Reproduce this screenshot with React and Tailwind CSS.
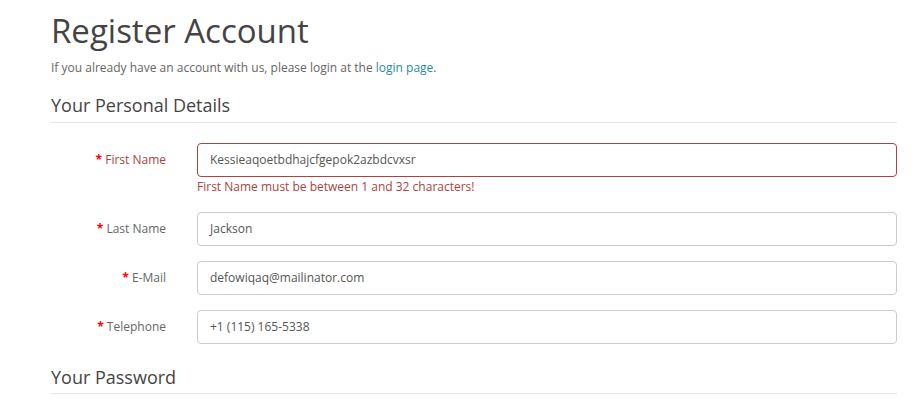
export default function App() {
  const rows = [
    { label: "First Name", value: "Kessieaqoetbdhajcfgepok2azbdcvxsr", error: "First Name must be between 1 and 32 characters!" },
    { label: "Last Name", value: "Jackson" },
    { label: "E-Mail", value: "defowiqaq@mailinator.com" },
    { label: "Telephone", value: "+1 (115) 165-5338" },
  ];
  return (
    <div className="w-[922px] h-[410px] overflow-hidden bg-white font-['Open_Sans',sans-serif] text-[#666]">
      <div className="pl-[51px] pr-[25px]">
        <h1 className="text-[33px] leading-[36px] text-[#444] pt-[13px] mb-[9px]">Register Account</h1>
        <p className="text-[12px] leading-[20px] mb-[15px]">
          If you already have an account with us, please login at the <span className="text-[#1f8c9c]">login page</span>.
        </p>
        <div className="text-[18px] leading-[24px] text-[#444] pb-[5px] border-b border-[#e5e5e5]">Your Personal Details</div>
        <div className="pt-[20px]">
          {rows.map((r) => (
            <div key={r.label} className="flex mb-[15px]">
              <div className={`w-[131px] shrink-0 pr-[16px] text-right text-[12px] leading-[34px] ${r.error ? "text-[#a94442]" : "text-[#666]"}`}>
                <span className="text-[#f00] font-bold">* </span>{r.label}
              </div>
              <div className="flex-1 pl-[15px]">
                <div className={`h-[34px] rounded-[4px] border px-[12px] flex items-center text-[12px] text-[#555] ${r.error ? "border-[#a94442]" : "border-[#ccc]"}`}>
                  {r.value}
                </div>
                {r.error && (
                  <div className="text-[12px] leading-[20px] text-[#a94442]">{r.error}</div>
                )}
              </div>
            </div>
          ))}
        </div>
        <div className="text-[18px] leading-[24px] text-[#444] pt-[6px] pb-[4px] border-b border-[#e5e5e5]">Your Password</div>
      </div>
    </div>
  );
}
